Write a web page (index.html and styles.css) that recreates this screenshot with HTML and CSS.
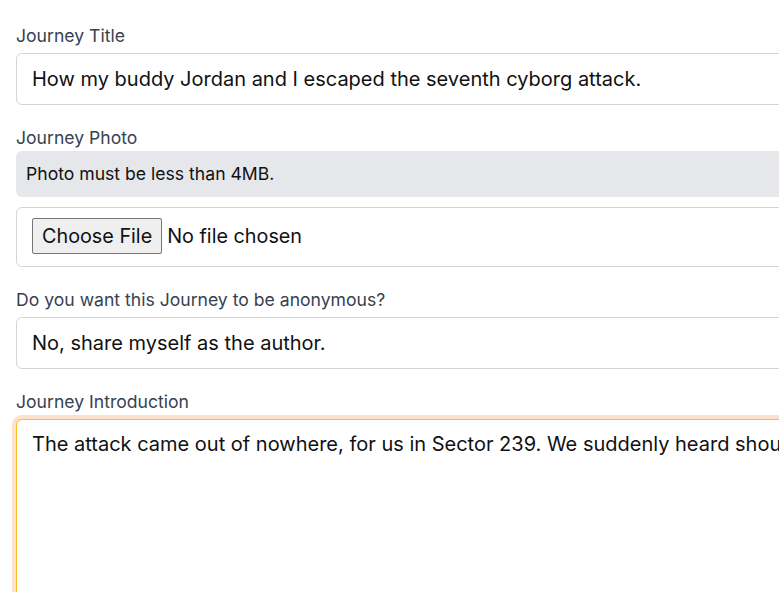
FILE: index.html
```html
<!DOCTYPE html>
<html>
<head>
<meta charset="utf-8">
<link rel="stylesheet" href="styles.css">
</head>
<body>
<form class="form">
  <div class="field">
    <label class="label">Journey Title</label>
    <input class="input" type="text" value="How my buddy Jordan and I escaped the seventh cyborg attack.">
  </div>
  <div class="field">
    <label class="label">Journey Photo</label>
    <div class="notice">Photo must be less than 4MB.</div>
    <div class="filebox"><input class="file" type="file"></div>
  </div>
  <div class="field">
    <label class="label">Do you want this Journey to be anonymous?</label>
    <div class="input select">No, share myself as the author.</div>
  </div>
  <div class="field">
    <label class="label">Journey Introduction</label>
    <textarea class="input textarea">The attack came out of nowhere, for us in Sector 239. We suddenly heard shouting from the streets.</textarea>
  </div>
</form>
</body>
</html>
```

FILE: styles.css
```css
html, body {
  margin: 0;
  padding: 0;
  overflow: hidden;
  background: #ffffff;
}
body {
  font-family: Inter, "Noto Sans", sans-serif;
  padding: 23px 16px 0 16px;
}
.form {
  width: 1200px;
  display: flex;
  flex-direction: column;
  gap: 20px;
}
.field {
  display: flex;
  flex-direction: column;
}
.label {
  font-size: 17.6px;
  line-height: 26px;
  color: #374151;
  margin-bottom: 4px;
}
.input {
  box-sizing: border-box;
  width: 100%;
  font-family: Inter, "Noto Sans", sans-serif;
  font-size: 20px;
  line-height: 28px;
  color: #111111;
  padding: 11px 15px;
  border: 1px solid #d1d5db;
  border-radius: 6px;
  background: #ffffff;
  outline: none;
  margin: 0;
  height: 52px;
}
.notice {
  box-sizing: border-box;
  background: #e5e7eb;
  border-radius: 6px;
  font-size: 17.6px;
  line-height: 26px;
  color: #111111;
  padding: 10px;
  margin-top: -4px;
}
.filebox {
  box-sizing: border-box;
  height: 60px;
  margin-top: 10px;
  border: 1px solid #d1d5db;
  border-radius: 6px;
  padding: 10px 15px 0 15px;
  display: flex;
  align-items: flex-start;
}
.file {
  font-family: Inter, "Noto Sans", sans-serif;
  font-size: 19.8px;
  color: #111111;
}
.file::file-selector-button {
  font-family: Inter, "Noto Sans", sans-serif;
  font-size: 19.8px;
  height: 36px;
  padding: 0 9px;
  margin-right: 5px;
  background: #efefef;
  border: 1px solid #767676;
  border-radius: 2px;
  color: #111111;
}
.textarea {
  height: 240px;
  resize: none;
  border-color: #fbbf24;
  box-shadow: 0 0 0 4px #fde1cc;
  overflow: hidden;
  padding-top: 10px;
}
```
